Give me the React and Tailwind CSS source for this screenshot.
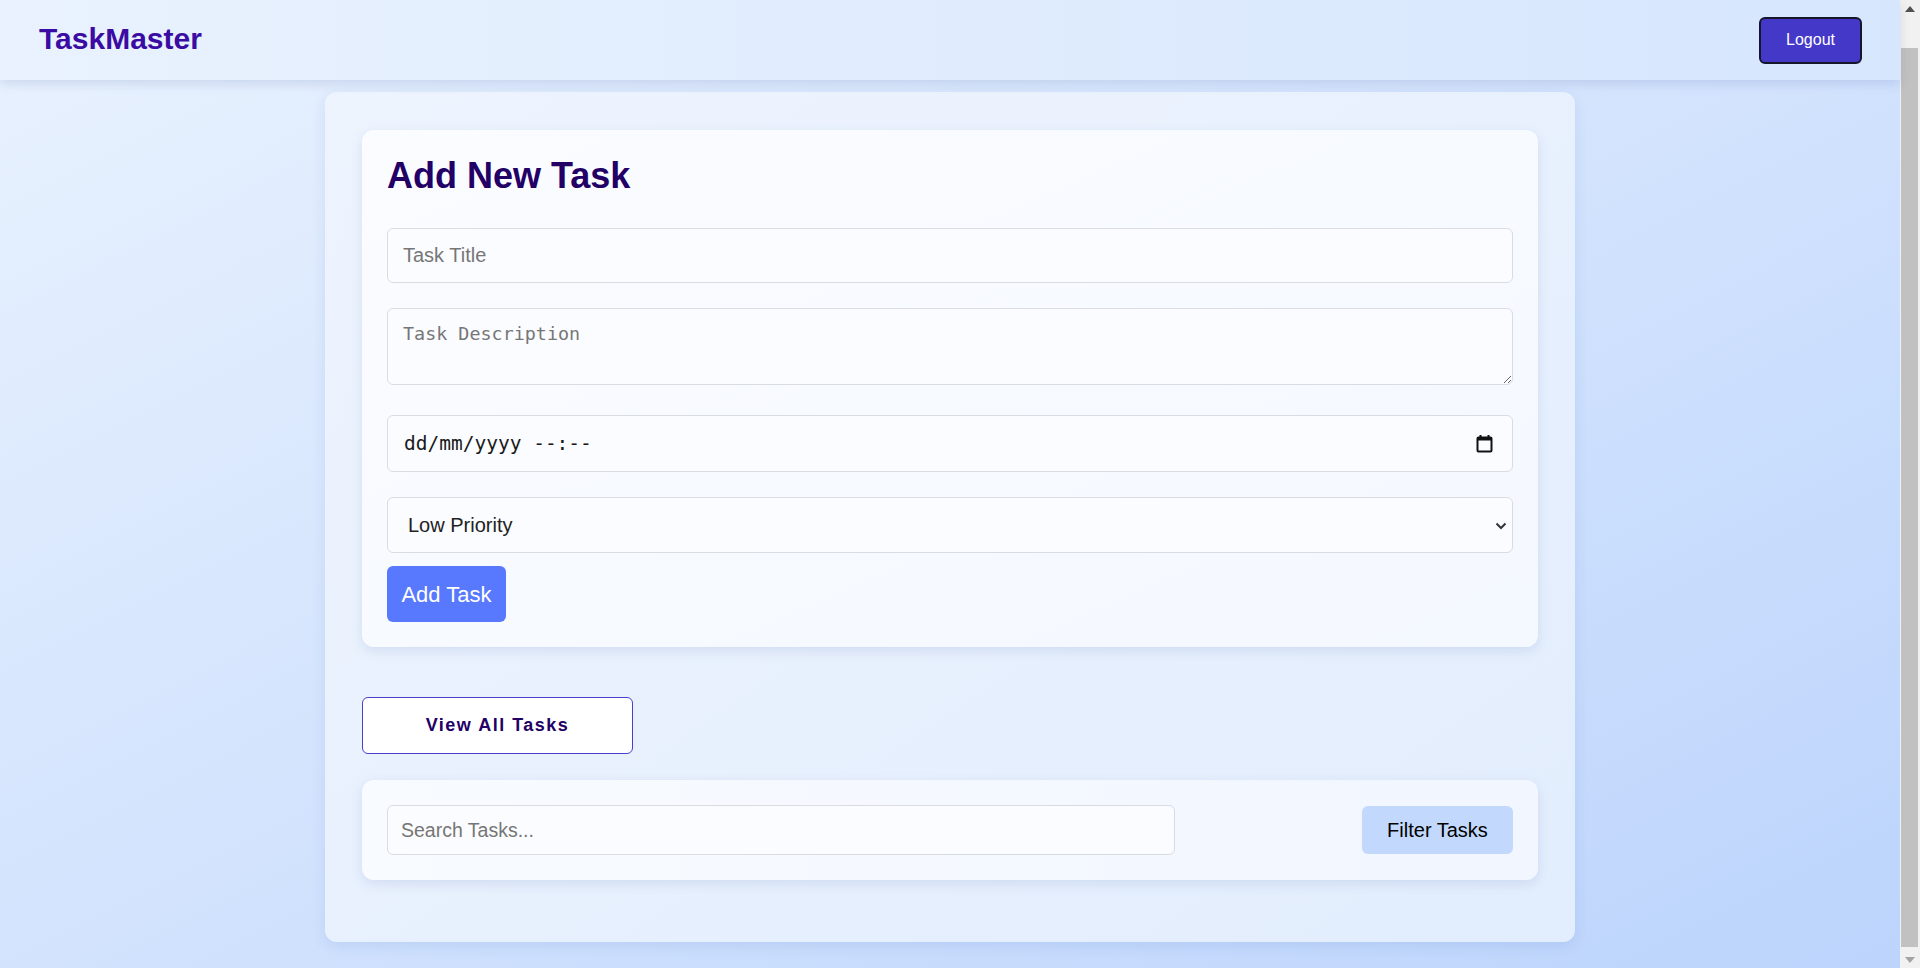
import { useState } from 'react';

function CalendarIcon() {
  return (
    <svg width="17" height="19" viewBox="0 0 17 19" fill="none" className="shrink-0">
      <rect x="1.5" y="3.5" width="14" height="14" rx="1" stroke="#111" strokeWidth="2" />
      <rect x="1.5" y="3" width="14" height="3.5" fill="#111" />
      <rect x="3.5" y="1" width="2" height="3" fill="#111" />
      <rect x="11.5" y="1" width="2" height="3" fill="#111" />
    </svg>
  );
}

function Chevron() {
  return (
    <svg width="12" height="8" viewBox="0 0 12 8" fill="none">
      <path d="M1.5 1.5 6 6l4.5-4.5" stroke="#333" strokeWidth="2" />
    </svg>
  );
}

// window scrollbar as it shows in the screenshot (scrolled to the bottom)
function Scrollbar() {
  return (
    <aside className="sticky top-0 h-screen w-5 shrink-0 flex flex-col bg-[#f1f1f1]">
      <div className="h-[17px] flex items-center justify-center">
        <svg width="10" height="6" viewBox="0 0 10 6">
          <path d="M0 6 5 0l5 6z" fill="#505050" />
        </svg>
      </div>
      <div className="flex-1 flex flex-col pt-[31px] pb-[4px] pl-px pr-[2px]">
        <div className="flex-1 bg-[#c1c1c1]" />
      </div>
      <div className="h-[17px] flex items-center justify-center">
        <svg width="10" height="6" viewBox="0 0 10 6">
          <path d="M0 0h10L5 6z" fill="#a3a3a3" />
        </svg>
      </div>
    </aside>
  );
}

export default function App() {
  const [title, setTitle] = useState('');
  const [desc, setDesc] = useState('');
  const [priority, setPriority] = useState('low');
  const [search, setSearch] = useState('');

  return (
    <div
      className="flex min-h-screen bg-linear-to-br from-[#e9f2fe] to-[#bcd4fc]"
      style={{ fontFamily: '"Liberation Sans", Arial, sans-serif' }}
    >
      <div className="flex-1 min-w-0 pb-[25px]">
        <header className="sticky top-0 z-10 h-20 flex items-center justify-between pl-[39px] pr-[38px] bg-linear-to-r from-[#e9f2fe] to-[#d6e6fd] shadow-[0_4px_10px_rgba(40,70,140,0.14)]">
          <h1 className="mb-1 text-[30px] font-bold text-[#3a0ca3]">TaskMaster</h1>
          <button className="h-[47px] px-[25px] rounded-md border-2 border-[#16162a] bg-[#4438c9] text-white text-base">
            Logout
          </button>
        </header>

        <main className="w-[1250px] mx-auto mt-3 rounded-xl bg-linear-to-br from-[#eef4fe] to-[#e2edfd] shadow-[0_4px_14px_rgba(60,100,180,0.12)] px-[37px] pt-[38px] pb-[62px]">
          <section className="rounded-xl bg-linear-to-br from-[#fafcff] to-[#f4f8ff] shadow-[0_4px_12px_rgba(60,90,160,0.13)] p-[25px]">
            <h2 className="text-[36px] leading-[41px] font-bold text-[#230066] mb-8">Add New Task</h2>

            <input
              value={title}
              onChange={(e) => setTitle(e.target.value)}
              placeholder="Task Title"
              className="block w-full h-[55px] mb-[25px] px-[15px] rounded-md border border-[#d9dce3] bg-[#fbfcff] text-[20px] text-[#222] placeholder:text-[#767676] outline-none"
            />

            <textarea
              value={desc}
              onChange={(e) => setDesc(e.target.value)}
              placeholder="Task Description"
              className="block w-full h-[77px] mb-[30px] px-[15px] pt-[14px] pb-[10px] rounded-md border border-[#d9dce3] bg-[#fbfcff] text-[18.4px] leading-[22px] text-[#222] placeholder:text-[#767676] outline-none"
              style={{ fontFamily: '"DejaVu Sans Mono", monospace' }}
            />

            <div className="flex items-center justify-between w-full h-[57px] mb-[25px] pl-[16px] pr-[19px] rounded-md border border-[#d9dce3] bg-[#fbfcff]">
              <span
                className="text-[19.5px] text-[#1a1a1a]"
                style={{ fontFamily: '"DejaVu Sans Mono", monospace' }}
              >
                dd/mm/yyyy --:--
              </span>
              <CalendarIcon />
            </div>

            <div className="relative mb-[13px]">
              <select
                value={priority}
                onChange={(e) => setPriority(e.target.value)}
                className="block w-full h-[56px] appearance-none pl-[20px] pr-8 rounded-md border border-[#d9dce3] bg-[#fbfcff] text-[20px] text-[#222] outline-none"
              >
                <option value="low">Low Priority</option>
                <option value="medium">Medium Priority</option>
                <option value="high">High Priority</option>
              </select>
              <span className="pointer-events-none absolute right-[6px] top-[25px] flex">
                <Chevron />
              </span>
            </div>

            <button className="h-[56px] w-[119px] rounded-md bg-[#5878fe] text-white text-[22px]">
              Add Task
            </button>
          </section>

          <button className="mt-[50px] h-[57px] w-[271px] rounded-md border border-[#4a3ecf] bg-white text-[18px] font-bold tracking-[1.5px] text-[#230066]">
            View All Tasks
          </button>

          <section className="mt-[26px] flex items-center justify-between rounded-xl bg-linear-to-r from-[#f8fbff] to-[#f1f6ff] shadow-[0_4px_12px_rgba(60,90,160,0.13)] p-[25px]">
            <input
              value={search}
              onChange={(e) => setSearch(e.target.value)}
              placeholder="Search Tasks..."
              className="w-[70%] h-[50px] px-[13px] rounded-md border border-[#d9dce3] bg-[#fbfcff] text-[19.5px] text-[#222] placeholder:text-[#767676] outline-none"
            />
            <button className="h-[48px] w-[151px] rounded-md bg-[#c2d9fd] text-[20px] text-black">
              Filter Tasks
            </button>
          </section>
        </main>
      </div>
      <Scrollbar />
    </div>
  );
}
